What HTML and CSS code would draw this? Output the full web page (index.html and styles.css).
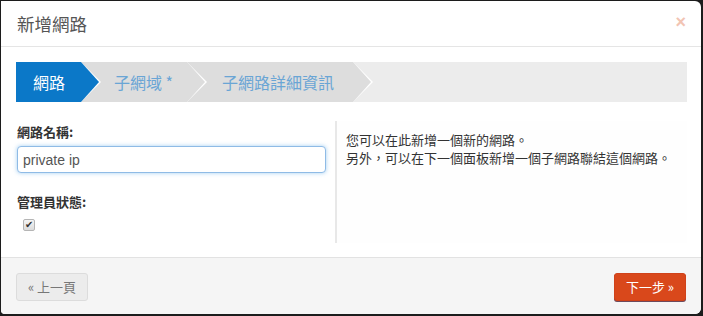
FILE: index.html
```html
<!DOCTYPE html>
<html lang="zh-Hant">
<head>
<meta charset="utf-8">
<title>新增網路</title>
<link rel="stylesheet" href="styles.css">
</head>
<body>
<div class="modal">
  <div class="modal-header">
    <h3 class="title">新增網路</h3>
    <span class="close">×</span>
  </div>
  <div class="modal-body">
    <ul class="wizard">
      <li class="step step-1 active">網路</li>
      <li class="step step-2">子網域 *</li>
      <li class="step step-3">子網路詳細資訊</li>
    </ul>
    <div class="pane">
      <div class="fields">
        <label class="label">網路名稱:</label>
        <input class="input" type="text" value="private ip">
        <label class="label label-admin">管理員狀態:</label>
        <input class="check" type="checkbox" checked>
      </div>
      <div class="help">
        <p>您可以在此新增一個新的網路。</p>
        <p>另外，可以在下一個面板新增一個子網路聯結這個網路。</p>
      </div>
    </div>
  </div>
  <div class="modal-footer">
    <button class="btn btn-back">« 上一頁</button>
    <button class="btn btn-next">下一步 »</button>
  </div>
</div>
</body>
</html>
```
FILE: styles.css
```css
* { box-sizing: border-box; }
html, body { margin: 0; padding: 0; }
body {
  background: #1c1c1c;
  width: 703px;
  height: 316px;
  overflow: hidden;
  font-family: "Liberation Sans", "Noto Sans CJK TC", sans-serif;
  color: #333;
}
.modal {
  margin: 1px 2px 0 1px;
  width: 700px;
  height: 313px;
  background: #fff;
  border-radius: 0 6px 6px 4px;
  overflow: hidden;
  display: flex;
  flex-direction: column;
}
.modal-header {
  height: 46px;
  border-bottom: 1px solid #e5e5e5;
  padding: 0 16px;
  display: flex;
  align-items: center;
  justify-content: space-between;
}
.title {
  margin: 0;
  font-weight: normal;
  font-size: 17.5px;
  color: #555;
  font-family: "Noto Sans CJK TC", sans-serif;
}
.close {
  font-size: 18px;
  font-weight: bold;
  color: #f2c4b3;
  margin-right: -1px;
  margin-top: -2px;
}
.modal-body {
  padding: 15px 14px 14px 15px;
  flex: 1;
}
.wizard {
  list-style: none;
  margin: 0;
  padding: 0;
  height: 40px;
  background: #ececec;
  display: flex;
}
.step {
  position: relative;
  height: 40px;
  line-height: 40px;
  background: #dddddd;
  color: #6aa5d5;
  font-size: 16px;
  font-family: "Noto Sans CJK TC", sans-serif;
  padding: 0 14px 0 33px;
}
.step::before, .step::after {
  content: "";
  position: absolute;
  top: 0;
  width: 0;
  height: 0;
  border-top: 20px solid transparent;
  border-bottom: 20px solid transparent;
}
.step::before {
  right: -20px;
  border-left: 20px solid #fff;
}
.step::after {
  right: -18px;
  border-left: 18px solid #dddddd;
}
.step-1 { z-index: 3; padding-left: 17px; padding-right: 16px; }
.step-2 { z-index: 2; padding-right: 14px; }
.step-3 { z-index: 1; padding-left: 35px; padding-right: 19px; }
.step.active { background: #0b78c8; color: #fff; }
.step.active::after { border-left-color: #0b78c8; }
.pane {
  display: flex;
  margin-top: 19px;
  height: 122px;
}
.fields {
  width: 319px;
  padding: 2px 0 0 1px;
  display: flex;
  flex-direction: column;
  align-items: flex-start;
}
.label {
  font-size: 13px;
  line-height: 18px;
  font-weight: bold;
  color: #333;
  font-family: "Noto Sans CJK TC", sans-serif;
}
.input {
  margin-top: 5px;
  width: 309px;
  height: 27px;
  border: 1px solid #8fbbe6;
  border-radius: 4px;
  box-shadow: 0 0 4px rgba(102, 175, 233, 0.6);
  padding: 0 5px;
  font-size: 14px;
  font-family: "Liberation Sans", sans-serif;
  color: #555;
  outline: none;
}
.label-admin { margin-top: 20px; }
.check {
  -webkit-appearance: none;
  appearance: none;
  position: relative;
  margin: 8px 0 0 6px;
  width: 12px;
  height: 12px;
  border: 1px solid #b5b5b5;
  border-radius: 2px;
  background: linear-gradient(#f4f4f4, #dcdcdc);
}
.check::after {
  content: "✔";
  position: absolute;
  left: 1px;
  top: -2px;
  font-size: 10px;
  line-height: 14px;
  color: #333;
  font-family: "DejaVu Sans", sans-serif;
}
.help {
  flex: 1;
  border-left: 2px solid #e8e8e8;
  padding: 10px 0 0 9px;
  background: #fefefe;
  font-size: 13px;
  line-height: 18px;
  color: #333;
  font-family: "Noto Sans CJK TC", sans-serif;
}
.help p { margin: 0; }
.modal-footer {
  height: 57px;
  border-top: 1px solid #e2e2e2;
  background: #f5f5f5;
  padding: 15px 15px 0 15px;
  display: flex;
  justify-content: space-between;
  align-items: flex-start;
}
.btn {
  height: 28px;
  border-radius: 3px;
  font-size: 13px;
  font-family: "Noto Sans CJK TC", sans-serif;
  padding: 0 10px;
  line-height: 26px;
}
.btn-back {
  width: 72px;
  background: #ececec;
  border: 1px solid #dcdcdc;
  color: #777;
}
.btn-next {
  width: 72px;
  background: #d9481b;
  border: 1px solid #d0421a;
  color: #fff;
  box-shadow: 0 1px 0 #6e4a5c;
}
```
